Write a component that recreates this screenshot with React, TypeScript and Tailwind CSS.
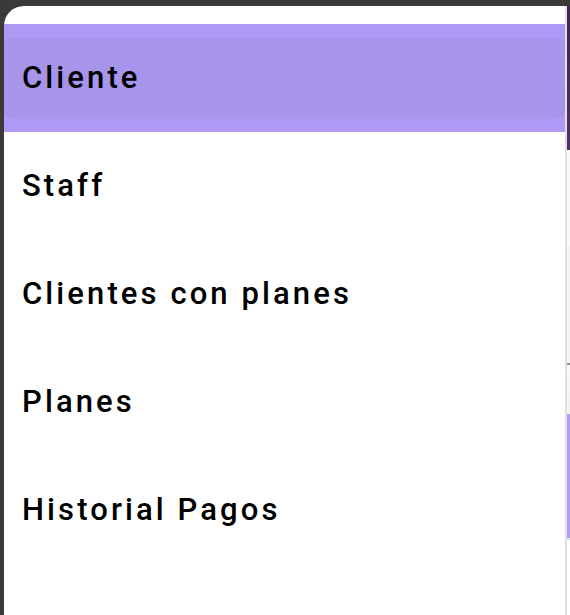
const sections = ["Cliente", "Staff", "Clientes con planes", "Planes", "Historial Pagos"];

function Sidebar() {
  return (
    <nav
      aria-label="Secciones"
      className="min-w-0 flex-1 overflow-hidden rounded-tl-[20px] border-r-2 border-[#e0e0e0] bg-white pt-[18px]"
    >
      <ul>
        {sections.map((section, index) => (
          <li
            key={section}
            className={`flex h-[108px] items-center ${index === 0 ? "bg-[#ae9af5]" : "bg-white"}`}
          >
            <button
              type="button"
              aria-current={index === 0 ? "page" : undefined}
              className={`h-[81px] w-full rounded-[9px] px-[18px] text-left text-[31px] font-medium tracking-widest text-black ${
                index === 0 ? "bg-[#a794eb]" : "bg-transparent"
              }`}
            >
              {section}
            </button>
          </li>
        ))}
      </ul>
    </nav>
  );
}

function ContentEdge() {
  return (
    <main className="flex w-[3px] shrink-0 flex-col bg-white">
      <div className="h-36 bg-linear-to-b from-[#432359] to-[#4f3068]" />
      <div className="h-24 bg-[#fafafa]" />
      <div className="h-[117px] bg-[#f4f4f4]" />
      <div className="h-[2px] bg-[#8e8e8e]" />
      <div className="h-[49px] bg-linear-to-b from-[#fafafa] to-[#f0f0f0]" />
      <div className="h-[124px] bg-[#b39dfb]" />
      <div className="h-[2px] bg-[#c9efe6]" />
    </main>
  );
}

export default function App() {
  return (
    <div className="flex min-h-screen flex-col bg-[#3b3a39] pt-[6px] pl-1 font-['Roboto',sans-serif]">
      <div className="flex flex-1">
        <Sidebar />
        <ContentEdge />
      </div>
    </div>
  );
}
